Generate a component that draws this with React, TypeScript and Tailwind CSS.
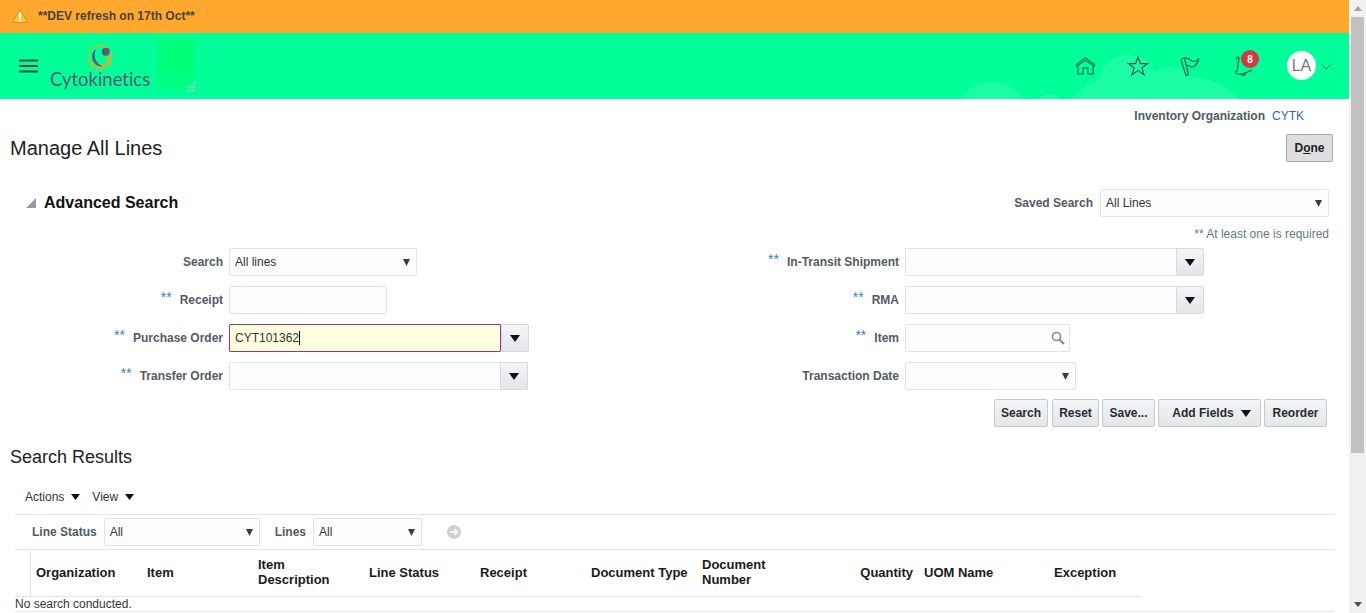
import React from "react";

const Stars = () => <span className="text-[#3d7fc1] text-[14px] font-normal leading-none relative -top-[3px] mr-[8px]">**</span>;

const Label = ({ text, req, w }: { text: string; req?: boolean; w: string }) => (
  <div className={`${w} shrink-0 flex justify-end items-center text-[12px] font-bold text-[#4f5b66] mr-[6px]`}>
    {req && <Stars />}
    <span>{text}</span>
  </div>
);

const Caret = ({ size = "sm" }: { size?: "sm" | "md" | "lg" }) => {
  const w = size === "sm" ? 7 : size === "md" ? 9 : 10;
  const h = size === "sm" ? 7 : size === "md" ? 6 : 7;
  return (
    <svg width={w} height={h} viewBox="0 0 10 7" preserveAspectRatio="none" className="shrink-0">
      <path d="M0 0H10L5 7Z" fill={size === "sm" ? "#3b3b3b" : "#111"} />
    </svg>
  );
};

const Select = ({ text, w }: { text?: string; w: string }) => (
  <div className={`${w} h-[28px] border border-[#dfe4ea] rounded-[2px] bg-[#fcfdfe] flex items-center justify-between pl-[5px] pr-[6px] text-[12px] text-[#333]`}>
    <span>{text}</span>
    <Caret />
  </div>
);

const Combo = ({ w, btn = "w-[28px]" }: { w: string; btn?: string }) => (
  <div className="flex h-[28px]">
    <div className={`${w} border border-[#dfe4ea] border-r-0 rounded-l-[2px] bg-[#fcfdfe]`} />
    <div className={`${btn} border border-[#d5dadf] rounded-r-[2px] bg-gradient-to-b from-[#f3f5f6] to-[#e2e6e9] flex items-center justify-center`}>
      <Caret size="lg" />
    </div>
  </div>
);

const Btn = ({ children, w }: { children: React.ReactNode; w: string }) => (
  <div className={`${w} h-[28px] border border-[#c4cad0] rounded-[2px] bg-gradient-to-b from-[#f3f5f6] to-[#e3e7ea] flex items-center justify-center text-[12px] font-bold text-[#252c33]`}>
    {children}
  </div>
);

const Row = ({ children }: { children: React.ReactNode }) => <div className="flex h-[28px] items-stretch">{children}</div>;

const columns: { label: React.ReactNode; w: string; right?: boolean }[] = [
  { label: "Organization", w: "w-[111px] -ml-[1px]" },
  { label: "Item", w: "w-[111px]" },
  { label: <>Item<br />Description</>, w: "w-[111px]" },
  { label: "Line Status", w: "w-[111px]" },
  { label: "Receipt", w: "w-[111px]" },
  { label: "Document Type", w: "w-[111px]" },
  { label: <>Document<br />Number</>, w: "w-[111px]" },
  { label: "Quantity", w: "w-[112px]", right: true },
  { label: "UOM Name", w: "w-[130px] -ml-[1px]" },
  { label: "Exception", w: "w-[86px]" },
];

const ink = "#1f5a4d";

export default function App() {
  return (
    <div className="flex h-[613px] w-[1366px] overflow-hidden bg-white font-['Liberation_Sans',Arial,sans-serif]">
      <div className="w-[1349px] shrink-0 flex flex-col">
        <div className="h-[33px] shrink-0 bg-[#ffa82d] flex items-center pl-[12px] pb-[2px] text-[12px] text-[#444] font-bold">
          <svg width="16" height="15" viewBox="0 0 16 15" className="mr-[10px]">
            <path d="M8 1L15.5 14.5H.5Z" fill="#f5c43c" stroke="#c79a25" />
            <rect x="7" y="5" width="2" height="5.5" fill="#fff" />
            <rect x="7" y="11.5" width="2" height="2" fill="#fff" />
          </svg>
          <span>**DEV refresh on 17th Oct**</span>
        </div>

        <div className="relative h-[66px] shrink-0 bg-[#00ff99] flex items-center overflow-hidden">
          <svg className="absolute left-[950px] top-0" width="300" height="66" viewBox="0 0 300 66">
            <g fill="#1cfca4">
              <circle cx="42" cy="87" r="38" />
              <circle cx="100" cy="75" r="14" />
              <circle cx="178" cy="52" r="30" />
              <circle cx="220" cy="62" r="28" />
              <circle cx="170" cy="110" r="66" />
              <circle cx="235" cy="120" r="77" />
            </g>
          </svg>
          <svg className="relative ml-[19px] shrink-0" width="19" height="14" viewBox="0 0 19 14">
            <path d="M0 1.5H19M0 7H19M0 12.5H19" stroke="#1c4a46" strokeWidth="2" />
          </svg>
          <div className="relative ml-[12px] w-[100px] h-[56px] flex flex-col items-center shrink-0">
            <svg width="28" height="26" viewBox="0 0 28 26" className="shrink-0 mt-[6px]">
              <path fillRule="evenodd" d="M14 .5a12.5 12.5 0 1 0 .01 0Z M12.5 2.5a9.5 9.5 0 1 0 .01 0Z" fill="#a4c34a" />
              <path d="M10 5C6 8 5 13 7 17C9 21 13 23 17 22.5C13 21 10 18 9 14C8.5 11 9 8 10 5Z" fill="#5e5a74" />
              <path d="M22 3L26 8" stroke="#00ff99" strokeWidth="2.5" />
              <circle cx="19.8" cy="7.7" r="4" fill="#5e5a74" />
            </svg>
            <span className="text-[18.7px] leading-[20px] -mt-[1px] text-[#5f5a74] font-['Lato',sans-serif] tracking-[-0.1px] whitespace-nowrap">Cytokinetics</span>
          </div>
          <div className="relative ml-[6px] mb-[3px] w-[39px] h-[55px] bg-[radial-gradient(circle_at_60%_40%,#00ff70,#00ff90)] flex items-end justify-end shrink-0">
            <svg width="10" height="11" viewBox="0 0 10 11">
              <path d="M9.5 0V11M7.5 2V11M5.5 4V11M3.5 6V11M1.5 8V11" stroke="#e6f5ea" strokeWidth="1" strokeDasharray="1 1" />
            </svg>
          </div>

          <div className="relative ml-auto mr-[18px] flex items-center">
            <svg width="21" height="18" viewBox="0 0 22 19" fill="none" stroke={ink} strokeWidth="1.1" className="mr-[31px]">
              <path d="M1 8L11 1L21 8" />
              <path d="M1 10L11 3.5L21 10" />
              <path d="M3 9V18H8.5V11.5H13.5V18H19V9" />
            </svg>
            <svg width="22" height="20" viewBox="0 0 22 20" fill="none" stroke={ink} strokeWidth="1.1" className="mr-[31px]">
              <path d="M11 1L13.5 7.6H20.5L14.9 11.8L17 18.8L11 14.6L5 18.8L7.1 11.8L1.5 7.6H8.5Z" />
            </svg>
            <svg width="20" height="21" viewBox="0 0 20 21" fill="none" stroke={ink} strokeWidth="1.1" className="mr-[34px]">
              <path d="M1 4C3 0 8 2 12 5C14 6 17 5 19 2.5C18 6 16 10 13 11C11 11.5 9 10 7 9" />
              <path d="M1 4L6 19.5L8.5 18.5L4.5 2.5" />
            </svg>
            <div className="relative w-[22px] h-[20px] mr-[31px]">
              <svg width="22" height="22" viewBox="0 0 22 22" fill="none" stroke={ink} strokeWidth="1.1" className="absolute left-0 top-0">
                <path d="M3 4C1 2 4 0 5 2C5 5 4 6 4 9C4 12 3 15 1.5 16C1 18 4 18 6 18C10 18 14 16 18 14" />
                <path d="M7 18C8 20 11 20 12 17" />
              </svg>
              <div className="absolute -top-[6px] left-[7px] w-[18px] h-[18px] rounded-full bg-[#d23a3f] flex items-center justify-center text-[10px] font-bold text-white">8</div>
            </div>
            <div className="w-[29px] h-[29px] rounded-full bg-white flex items-center justify-center text-[16px] text-[#777] mr-[5px] -mt-[1px]">LA</div>
            <svg width="10" height="6" viewBox="0 0 10 6" fill="none" stroke="#3e6b62" strokeWidth="1" className="mt-[1px]"><path d="M.5 .5L5 5L9.5 .5" /></svg>
          </div>
        </div>

        <div className="h-[33px] shrink-0 flex justify-end items-center pr-[45px] text-[12px] gap-[7px]">
          <span className="font-bold text-[#4f5b66]">Inventory Organization</span>
          <span className="text-[#37679a]">CYTK</span>
        </div>

        <div className="h-[31px] shrink-0 flex items-center justify-between pl-[10px] pr-[16px]">
          <h1 className="text-[20px] text-[#222]">Manage All Lines</h1>
          <div className="w-[47px] h-[28px] border border-[#a8a8a8] rounded-[2px] bg-[#dedede] flex items-center justify-center text-[12px] font-bold text-[#222]">
            <span>D<span className="underline">o</span>ne</span>
          </div>
        </div>

        <div className="flex items-center justify-between h-[28px] mt-[26px] pl-[26px] pr-[20px] shrink-0">
          <div className="flex items-center gap-[8px]">
            <svg width="10" height="10" viewBox="0 0 10 10"><path d="M10 0V10H0Z" fill="#9a9a9a" /></svg>
            <span className="text-[16px] font-bold text-[#111]">Advanced Search</span>
          </div>
          <div className="flex items-center">
            <span className="text-[12px] font-bold text-[#4f5b66] mr-[7px]">Saved Search</span>
            <Select text="All Lines" w="w-[229px]" />
          </div>
        </div>

        <div className="h-[31px] shrink-0 flex items-center justify-end pr-[20px] pt-[3px] text-[12px] text-[#62788c]">
          <span><span className="text-[#3d7fc1]">**</span> At least one is required</span>
        </div>

        <div className="flex shrink-0">
          <div className="w-[745px] flex flex-col gap-[10px]">
            <Row><Label text="Search" w="w-[223px]" /><Select text="All lines" w="w-[188px]" /></Row>
            <Row><Label text="Receipt" req w="w-[223px]" /><div className="w-[158px] border border-[#dfe4ea] rounded-[2px] bg-[#fcfdfe]" /></Row>
            <Row>
              <Label text="Purchase Order" req w="w-[223px]" />
              <div className="w-[272px] border border-[#a8316f] rounded-[1px] bg-[#ffffe0] flex items-center pl-[5px] text-[12px] text-[#333]">
                CYT101362<span className="w-px h-[14px] bg-black" />
              </div>
              <div className="w-[28px] border border-[#d5dadf] rounded-r-[2px] bg-gradient-to-b from-[#f3f5f6] to-[#e2e6e9] flex items-center justify-center"><Caret size="lg" /></div>
            </Row>
            <Row><Label text="Transfer Order" req w="w-[223px]" /><Combo w="w-[271px]" /></Row>
          </div>
          <div className="flex flex-col gap-[10px]">
            <Row><Label text="In-Transit Shipment" req w="w-[154px]" /><Combo w="w-[271px]" /></Row>
            <Row><Label text="RMA" req w="w-[154px]" /><Combo w="w-[271px]" /></Row>
            <Row>
              <Label text="Item" req w="w-[154px]" />
              <div className="w-[165px] border border-[#dfe4ea] rounded-[2px] bg-[#fcfdfe] flex items-center justify-end pr-[4px]">
                <svg width="14" height="14" viewBox="0 0 14 14" fill="none" stroke="#8a8a8a"><circle cx="5.5" cy="5.5" r="4" strokeWidth="1.6" /><path d="M8.5 8.5L13 13" strokeWidth="2.2" /></svg>
              </div>
            </Row>
            <Row><Label text="Transaction Date" w="w-[154px]" /><Select w="w-[171px]" /></Row>
          </div>
        </div>

        <div className="flex justify-end h-[28px] mt-[9px] pr-[22px] gap-[3px] shrink-0">
          <Btn w="w-[54px] mr-[1px]">Search</Btn>
          <Btn w="w-[47px]">Reset</Btn>
          <Btn w="w-[53px]">Save...</Btn>
          <Btn w="w-[103px] pl-[4px] gap-[7px]">Add Fields <Caret size="lg" /></Btn>
          <Btn w="w-[63px]">Reorder</Btn>
        </div>

        <div className="h-[30px] mt-[15px] pl-[10px] flex items-center text-[18px] text-[#222] shrink-0">Search Results</div>

        <div className="mx-[15px] flex flex-col shrink-0 w-[1319px]">
          <div className="h-[43px] pt-[7px] border-b border-[#dfe4ea] flex items-center pl-[10px] text-[12px] text-[#333]">
            <span className="mr-[7px]">Actions</span><Caret size="md" />
            <span className="ml-[12px] mr-[7px]">View</span><Caret size="md" />
          </div>
          <div className="h-[35px] border-b border-[#dfe4ea] flex items-center pl-[17px] text-[12px]">
            <span className="font-bold text-[#4f5b66] mr-[7px]">Line Status</span>
            <Select text="All" w="w-[156px]" />
            <span className="font-bold text-[#4f5b66] ml-[15px] mr-[7px]">Lines</span>
            <Select text="All" w="w-[109px]" />
            <svg width="14" height="14" viewBox="0 0 14 14" className="ml-[25px]">
              <circle cx="7" cy="7" r="7" fill="#cfcfcf" />
              <path d="M3 7H10M7.5 4L10.5 7L7.5 10" stroke="#fff" strokeWidth="1.6" fill="none" />
            </svg>
          </div>
          <div className="w-[1126px] h-[47px] flex border-b border-[#dfe4ea]">
            <div className="w-[16px] shrink-0 border-r border-[#dfe4ea] mt-[1px]" />
            {columns.map((c, i) => (
              <div key={i} className={`${c.w} shrink-0 flex items-center px-[6px] pb-[2px] text-[13px]/[15px] text-[#1a1a1a] font-bold ${c.right ? "justify-end" : ""}`}>
                <span>{c.label}</span>
              </div>
            ))}
          </div>
          <div className="h-[15px] border-b border-[#dfe4ea] text-[12px] leading-[14px] text-[#333]">No search conducted.</div>
        </div>
      </div>

      <div className="w-[17px] shrink-0 bg-[#f1f1f1] flex flex-col">
        <div className="h-[17px] flex items-center justify-center shrink-0">
          <svg width="8" height="5" viewBox="0 0 8 5"><path d="M4 0L8 5H0Z" fill="#a3a3a3" /></svg>
        </div>
        <div className="h-[436px] mx-[2px] bg-[#c1c1c1] shrink-0" />
        <div className="mt-auto h-[17px] flex items-center justify-center shrink-0">
          <svg width="8" height="5" viewBox="0 0 8 5"><path d="M0 0H8L4 5Z" fill="#505050" /></svg>
        </div>
      </div>
    </div>
  );
}
